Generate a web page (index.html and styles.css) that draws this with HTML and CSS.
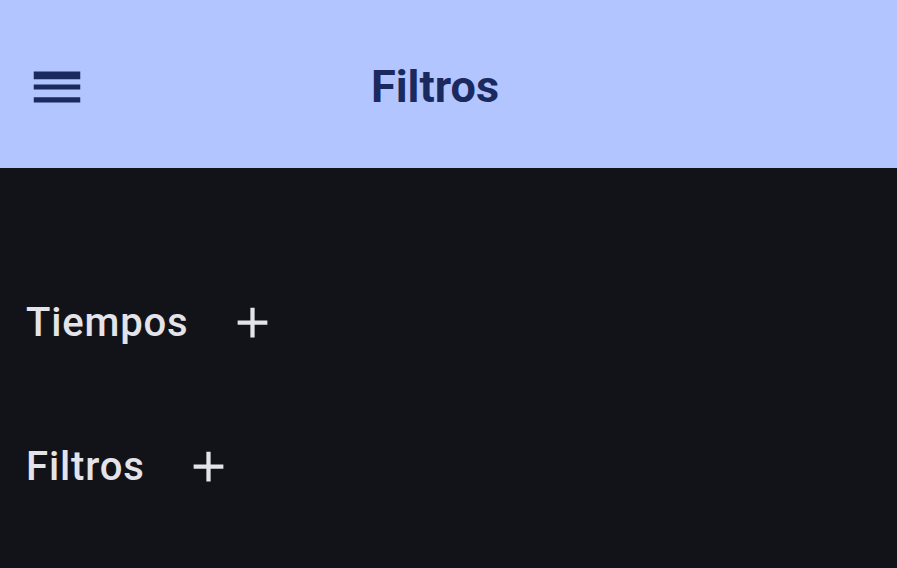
FILE: index.html
```html
<!DOCTYPE html>
<html lang="es">
<head>
<meta charset="utf-8">
<title>Filtros</title>
<link rel="stylesheet" href="styles.css">
</head>
<body>
<header class="topbar">
  <button class="nav-btn" aria-label="Menú">
    <svg viewBox="0 0 24 24" width="62" height="62"><path fill="#1b2a5e" d="M3 18h18v-2H3v2zm0-5h18v-2H3v2zm0-6v2h18V6H3z"/></svg>
  </button>
  <h1 class="title">Filtros</h1>
</header>
<main class="content">
  <div class="row">
    <span class="label">Tiempos</span>
    <svg class="add" viewBox="0 0 24 24" width="51" height="51"><path fill="#e4e3ea" d="M19 13h-6v6h-2v-6H5v-2h6V5h2v6h6v2z"/></svg>
  </div>
  <div class="row">
    <span class="label">Filtros</span>
    <svg class="add" viewBox="0 0 24 24" width="51" height="51"><path fill="#e4e3ea" d="M19 13h-6v6h-2v-6H5v-2h6V5h2v6h6v2z"/></svg>
  </div>
</main>
</body>
</html>
```
FILE: styles.css
```css
html, body {
  margin: 0;
  padding: 0;
  background: #121318;
  font-family: Roboto, "Noto Sans", sans-serif;
}
.topbar {
  height: 168px;
  background: #b3c5ff;
  display: flex;
  align-items: center;
  padding-left: 26px;
  box-sizing: border-box;
}
.nav-btn {
  border: 0;
  background: none;
  padding: 0;
  width: 62px;
  height: 62px;
  display: flex;
  margin-top: 6px;
}
.title {
  margin: 0 0 0 283px;
  font-size: 45px;
  font-weight: 700;
  color: #1b2a5e;
  line-height: 1;
  margin-top: 4px;
}
.content {
  padding: 129px 0 0 26px;
  display: flex;
  flex-direction: column;
  gap: 93px;
}
.row {
  display: flex;
  align-items: center;
  gap: 38px;
  height: 51px;
}
.label {
  font-size: 40px;
  font-weight: 500;
  letter-spacing: 0.85px;
  color: #e4e3ea;
  line-height: 1;
}
.add {
  display: block;
}
```
